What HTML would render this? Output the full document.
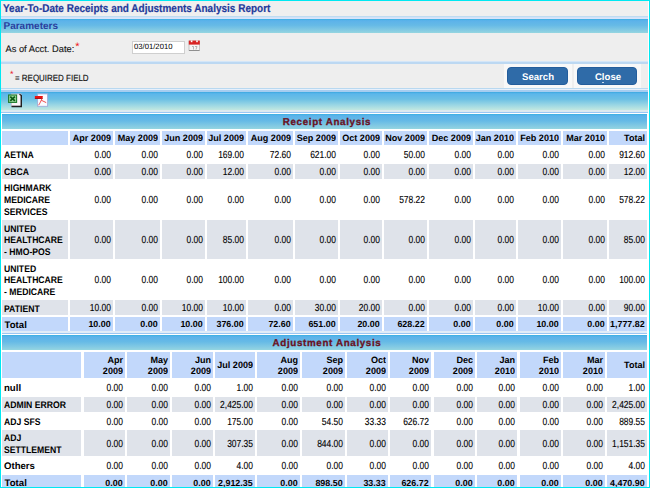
<!DOCTYPE html>
<html><head><meta charset="utf-8"><style>
html,body{margin:0;padding:0;}
body{width:650px;height:488px;position:relative;overflow:hidden;font-family:"Liberation Sans", sans-serif;text-rendering:geometricPrecision;}
body>div{position:absolute;}
.t{white-space:nowrap;}
</style></head><body>
<div style="left:0px;top:0px;width:650px;height:488px;background:#ffffff;"></div><div style="left:1px;top:1px;width:647px;height:15px;background:#efefef;"></div><div class="t" style="left:3px;top:3.29px;font-size:11.3px;line-height:12.99px;font-weight:bold;color:#1f3b9b;transform:scaleX(0.885);transform-origin:0 0;-webkit-text-stroke:0.2px #1f3b9b;">Year-To-Date Receipts and Adjustments Analysis Report</div><div style="left:1px;top:16px;width:647px;height:1px;background:#bedcf2;"></div><div style="left:1px;top:17px;width:647px;height:1px;background:#d2e2f8;"></div><div style="left:1px;top:18px;width:647px;height:1px;background:#d8e4fa;"></div><div style="left:1px;top:19px;width:647px;height:14px;background:linear-gradient(#3ab0e2 0,#5cb2ea 12%,#66bae6 45%,#8ccfe2 90%,#94d6e0 100%);"></div><div class="t" style="left:3.5px;top:20.89px;font-size:10px;line-height:11.5px;font-weight:bold;color:#2a3f9e;">Parameters</div><div style="left:1px;top:33px;width:647px;height:28px;background:#eeeeee;"></div><div class="t" style="left:5.5px;top:43.73px;font-size:9.3px;line-height:10.7px;font-weight:normal;color:#151515;-webkit-text-stroke:0.12px #151515;">As of Acct. Date:</div><div class="t" style="left:75.3px;top:40.66px;font-size:11px;line-height:12.65px;font-weight:normal;color:#f01818;">*</div><div style="left:132px;top:41px;width:53px;height:13px;background:#fff;border:1px solid #cfcfcf;box-sizing:border-box;"></div><div class="t" style="left:134px;top:42.81px;font-size:7.7px;line-height:8.85px;font-weight:normal;color:#000;">03/01/2010</div><svg style="position:absolute;left:186px;top:38px" width="16" height="16" viewBox="186 38 16 16"><rect x="189" y="41" width="10.5" height="9.5" fill="#f6f6f6" stroke="#b8b8b8" stroke-width="0.8"/><rect x="188.8" y="40.6" width="11" height="4" fill="#d82424"/><rect x="190.8" y="40.4" width="1.6" height="1.8" fill="#fff"/><rect x="196.2" y="40.4" width="1.6" height="1.8" fill="#fff"/><path d="M192 46.5 h1.5 v3 M195 46.5 h2 l-1 3" stroke="#9a9a9a" stroke-width="0.7" fill="none"/><rect x="189" y="50" width="10.5" height="0.9" fill="#8a8a8a"/></svg><div style="left:1px;top:61px;width:647px;height:1px;background:#d4e6f8;"></div><div style="left:1px;top:62px;width:647px;height:2px;background:#bcd8f2;"></div><div style="left:1px;top:64px;width:647px;height:24px;background:#eeeeee;"></div><div class="t" style="left:10px;top:68.71px;font-size:9px;line-height:10.35px;font-weight:normal;color:#e8141e;">*</div><div class="t" style="left:14.5px;top:72.72px;font-size:9.1px;line-height:10.46px;font-weight:normal;color:#111;transform:scaleX(0.875);transform-origin:0 0;-webkit-text-stroke:0.15px #111;">= REQUIRED FIELD</div><div style="left:503.5px;top:64px;width:68.0px;height:24px;background:#f8f8f8;"></div><div style="left:573.5px;top:64px;width:67.5px;height:24px;background:#f8f8f8;"></div><div style="left:507px;top:66.7px;width:60.5px;height:18.5px;background:#2f6ba8;border:1px solid #235d9c;box-sizing:border-box;border-radius:4px;"></div><div style="left:577.3px;top:66.7px;width:60.200000000000045px;height:18.5px;background:#2f6ba8;border:1px solid #235d9c;box-sizing:border-box;border-radius:4px;"></div><div class="t" style="left:238px;top:71.85px;width:600px;text-align:center;font-size:9.6px;line-height:11.04px;font-weight:bold;color:#fff;">Search</div><div class="t" style="left:308px;top:71.85px;width:600px;text-align:center;font-size:9.6px;line-height:11.04px;font-weight:bold;color:#fff;">Close</div><div style="left:601.5px;top:81.5px;width:2.0px;height:1.0px;background:#c8d8ec;"></div><div style="left:1px;top:88px;width:647px;height:1px;background:#b8d8f0;"></div><div style="left:1px;top:89px;width:647px;height:1px;background:#e6f0fc;"></div><div style="left:1px;top:90px;width:647px;height:2px;background:#a6cdf0;"></div><div style="left:1px;top:92px;width:647px;height:17.5px;background:linear-gradient(#3aa8e0 0,#5cb6ea 10%,#6cc0e4 40%,#9ad6e4 72%,#c2e8e0 100%);"></div><div style="left:1px;top:109.5px;width:647px;height:2.0px;background:#dce9f0;"></div><div style="left:1px;top:111.5px;width:647px;height:1.0px;background:#9cc6f4;"></div><div style="left:1px;top:112.5px;width:647px;height:1.5px;background:#ffffff;"></div><svg style="position:absolute;left:0;top:88px" width="60" height="24" viewBox="0 88 60 24"><rect x="11.5" y="94" width="9.5" height="12" fill="#fbf6f8" stroke="#d0c8d0" stroke-width="0.8"/><path d="M19.5 94.2 L21.3 95.5 V106.5 H11.5" stroke="#202020" stroke-width="1.4" fill="none"/><rect x="8.6" y="95" width="8" height="7.4" fill="#98d898" stroke="#1f7a2c" stroke-width="1.1"/><path d="M10.3 96.6 L14.9 100.8 M14.9 96.6 L10.3 100.8" stroke="#0b5a14" stroke-width="1.7"/><rect x="37.6" y="93.9" width="10" height="12.4" fill="#fbfbff" stroke="#a0acd8" stroke-width="0.9"/><path d="M34.9 96 L42.8 96 L42.6 98.8 L34.9 98.8 Z" fill="#e81010"/><path d="M34.9 98 L42.6 98 L42.6 98.8 L34.9 98.8 Z" fill="#a00808"/><path d="M42 98.5 C41 101 39.8 103.5 38.6 105.2 M41.2 100.2 L46.2 102.6" stroke="#ee3a3a" stroke-width="0.9" fill="none"/></svg><div style="left:2px;top:114px;width:645px;height:15px;background:linear-gradient(#3ab0e2 0,#5cb2ea 12%,#66bae6 45%,#8ccfe2 90%,#94d6e0 100%);"></div><div class="t" style="left:27px;top:116.87px;width:600px;text-align:center;font-size:9.8px;line-height:11.27px;font-weight:bold;color:#6a1222;letter-spacing:0.65px;-webkit-text-stroke:0.3px #6a1222;">Receipt Analysis</div><div style="left:2px;top:131px;width:66px;height:14px;background:#c2d8fb;"></div><div class="t" style="left:4px;top:133.95px;font-size:9.6px;line-height:11.04px;font-weight:bold;color:#000;transform:scaleX(0.9);transform-origin:0 0;"></div><div style="left:70px;top:131px;width:43px;height:14px;background:#c2d8fb;"></div><div class="t" style="left:-188.9px;top:133.22px;width:300px;text-align:right;font-size:9.2px;line-height:10.58px;font-weight:bold;color:#000;transform:scaleX(0.985);transform-origin:100% 0;">Apr 2009</div><div style="left:115px;top:131px;width:45px;height:14px;background:#c2d8fb;"></div><div class="t" style="left:-141.9px;top:133.22px;width:300px;text-align:right;font-size:9.2px;line-height:10.58px;font-weight:bold;color:#000;transform:scaleX(0.985);transform-origin:100% 0;">May 2009</div><div style="left:162px;top:131px;width:43px;height:14px;background:#c2d8fb;"></div><div class="t" style="left:-96.9px;top:133.22px;width:300px;text-align:right;font-size:9.2px;line-height:10.58px;font-weight:bold;color:#000;transform:scaleX(0.985);transform-origin:100% 0;">Jun 2009</div><div style="left:207px;top:131px;width:39px;height:14px;background:#c2d8fb;"></div><div class="t" style="left:-55.900000000000006px;top:133.22px;width:300px;text-align:right;font-size:9.2px;line-height:10.58px;font-weight:bold;color:#000;transform:scaleX(0.985);transform-origin:100% 0;">Jul 2009</div><div style="left:248px;top:131px;width:45px;height:14px;background:#c2d8fb;"></div><div class="t" style="left:-8.899999999999977px;top:133.22px;width:300px;text-align:right;font-size:9.2px;line-height:10.58px;font-weight:bold;color:#000;transform:scaleX(0.985);transform-origin:100% 0;">Aug 2009</div><div style="left:295px;top:131px;width:43px;height:14px;background:#c2d8fb;"></div><div class="t" style="left:36.10000000000002px;top:133.22px;width:300px;text-align:right;font-size:9.2px;line-height:10.58px;font-weight:bold;color:#000;transform:scaleX(0.985);transform-origin:100% 0;">Sep 2009</div><div style="left:340px;top:131px;width:42px;height:14px;background:#c2d8fb;"></div><div class="t" style="left:80.10000000000002px;top:133.22px;width:300px;text-align:right;font-size:9.2px;line-height:10.58px;font-weight:bold;color:#000;transform:scaleX(0.985);transform-origin:100% 0;">Oct 2009</div><div style="left:384px;top:131px;width:43px;height:14px;background:#c2d8fb;"></div><div class="t" style="left:125.10000000000002px;top:133.22px;width:300px;text-align:right;font-size:9.2px;line-height:10.58px;font-weight:bold;color:#000;transform:scaleX(0.985);transform-origin:100% 0;">Nov 2009</div><div style="left:429px;top:131px;width:44px;height:14px;background:#c2d8fb;"></div><div class="t" style="left:171.10000000000002px;top:133.22px;width:300px;text-align:right;font-size:9.2px;line-height:10.58px;font-weight:bold;color:#000;transform:scaleX(0.985);transform-origin:100% 0;">Dec 2009</div><div style="left:475px;top:131px;width:41px;height:14px;background:#c2d8fb;"></div><div class="t" style="left:214.10000000000002px;top:133.22px;width:300px;text-align:right;font-size:9.2px;line-height:10.58px;font-weight:bold;color:#000;transform:scaleX(0.985);transform-origin:100% 0;">Jan 2010</div><div style="left:518px;top:131px;width:43px;height:14px;background:#c2d8fb;"></div><div class="t" style="left:259.1px;top:133.22px;width:300px;text-align:right;font-size:9.2px;line-height:10.58px;font-weight:bold;color:#000;transform:scaleX(0.985);transform-origin:100% 0;">Feb 2010</div><div style="left:563px;top:131px;width:44px;height:14px;background:#c2d8fb;"></div><div class="t" style="left:305.1px;top:133.22px;width:300px;text-align:right;font-size:9.2px;line-height:10.58px;font-weight:bold;color:#000;transform:scaleX(0.985);transform-origin:100% 0;">Mar 2010</div><div style="left:609px;top:131px;width:38px;height:14px;background:#c2d8fb;"></div><div class="t" style="left:345.1px;top:133.22px;width:300px;text-align:right;font-size:9.2px;line-height:10.58px;font-weight:bold;color:#000;transform:scaleX(0.985);transform-origin:100% 0;">Total</div><div style="left:2px;top:147px;width:66px;height:15px;background:#ffffff;"></div><div class="t" style="left:4px;top:150.45px;font-size:9.6px;line-height:11.04px;font-weight:bold;color:#000;transform:scaleX(0.9);transform-origin:0 0;">AETNA</div><div style="left:70px;top:147px;width:43px;height:15px;background:#ffffff;"></div><div class="t" style="left:-189.1px;top:150.3px;width:300px;text-align:right;font-size:10.2px;line-height:11.73px;font-weight:normal;color:#000;text-rendering:geometricPrecision;transform:scaleX(0.83);transform-origin:100% 0;-webkit-text-stroke:0.12px #000;">0.00</div><div style="left:115px;top:147px;width:45px;height:15px;background:#ffffff;"></div><div class="t" style="left:-142.1px;top:150.3px;width:300px;text-align:right;font-size:10.2px;line-height:11.73px;font-weight:normal;color:#000;text-rendering:geometricPrecision;transform:scaleX(0.83);transform-origin:100% 0;-webkit-text-stroke:0.12px #000;">0.00</div><div style="left:162px;top:147px;width:43px;height:15px;background:#ffffff;"></div><div class="t" style="left:-97.1px;top:150.3px;width:300px;text-align:right;font-size:10.2px;line-height:11.73px;font-weight:normal;color:#000;text-rendering:geometricPrecision;transform:scaleX(0.83);transform-origin:100% 0;-webkit-text-stroke:0.12px #000;">0.00</div><div style="left:207px;top:147px;width:39px;height:15px;background:#ffffff;"></div><div class="t" style="left:-56.099999999999994px;top:150.3px;width:300px;text-align:right;font-size:10.2px;line-height:11.73px;font-weight:normal;color:#000;text-rendering:geometricPrecision;transform:scaleX(0.83);transform-origin:100% 0;-webkit-text-stroke:0.12px #000;">169.00</div><div style="left:248px;top:147px;width:45px;height:15px;background:#ffffff;"></div><div class="t" style="left:-9.100000000000023px;top:150.3px;width:300px;text-align:right;font-size:10.2px;line-height:11.73px;font-weight:normal;color:#000;text-rendering:geometricPrecision;transform:scaleX(0.83);transform-origin:100% 0;-webkit-text-stroke:0.12px #000;">72.60</div><div style="left:295px;top:147px;width:43px;height:15px;background:#ffffff;"></div><div class="t" style="left:35.89999999999998px;top:150.3px;width:300px;text-align:right;font-size:10.2px;line-height:11.73px;font-weight:normal;color:#000;text-rendering:geometricPrecision;transform:scaleX(0.83);transform-origin:100% 0;-webkit-text-stroke:0.12px #000;">621.00</div><div style="left:340px;top:147px;width:42px;height:15px;background:#ffffff;"></div><div class="t" style="left:79.89999999999998px;top:150.3px;width:300px;text-align:right;font-size:10.2px;line-height:11.73px;font-weight:normal;color:#000;text-rendering:geometricPrecision;transform:scaleX(0.83);transform-origin:100% 0;-webkit-text-stroke:0.12px #000;">0.00</div><div style="left:384px;top:147px;width:43px;height:15px;background:#ffffff;"></div><div class="t" style="left:124.89999999999998px;top:150.3px;width:300px;text-align:right;font-size:10.2px;line-height:11.73px;font-weight:normal;color:#000;text-rendering:geometricPrecision;transform:scaleX(0.83);transform-origin:100% 0;-webkit-text-stroke:0.12px #000;">50.00</div><div style="left:429px;top:147px;width:44px;height:15px;background:#ffffff;"></div><div class="t" style="left:170.89999999999998px;top:150.3px;width:300px;text-align:right;font-size:10.2px;line-height:11.73px;font-weight:normal;color:#000;text-rendering:geometricPrecision;transform:scaleX(0.83);transform-origin:100% 0;-webkit-text-stroke:0.12px #000;">0.00</div><div style="left:475px;top:147px;width:41px;height:15px;background:#ffffff;"></div><div class="t" style="left:213.89999999999998px;top:150.3px;width:300px;text-align:right;font-size:10.2px;line-height:11.73px;font-weight:normal;color:#000;text-rendering:geometricPrecision;transform:scaleX(0.83);transform-origin:100% 0;-webkit-text-stroke:0.12px #000;">0.00</div><div style="left:518px;top:147px;width:43px;height:15px;background:#ffffff;"></div><div class="t" style="left:258.9px;top:150.3px;width:300px;text-align:right;font-size:10.2px;line-height:11.73px;font-weight:normal;color:#000;text-rendering:geometricPrecision;transform:scaleX(0.83);transform-origin:100% 0;-webkit-text-stroke:0.12px #000;">0.00</div><div style="left:563px;top:147px;width:44px;height:15px;background:#ffffff;"></div><div class="t" style="left:304.9px;top:150.3px;width:300px;text-align:right;font-size:10.2px;line-height:11.73px;font-weight:normal;color:#000;text-rendering:geometricPrecision;transform:scaleX(0.83);transform-origin:100% 0;-webkit-text-stroke:0.12px #000;">0.00</div><div style="left:609px;top:147px;width:38px;height:15px;background:#ffffff;"></div><div class="t" style="left:344.9px;top:150.3px;width:300px;text-align:right;font-size:10.2px;line-height:11.73px;font-weight:normal;color:#000;text-rendering:geometricPrecision;transform:scaleX(0.83);transform-origin:100% 0;-webkit-text-stroke:0.12px #000;">912.60</div><div style="left:2px;top:164px;width:66px;height:15px;background:#dfe3ea;"></div><div class="t" style="left:4px;top:167.45px;font-size:9.6px;line-height:11.04px;font-weight:bold;color:#000;transform:scaleX(0.9);transform-origin:0 0;">CBCA</div><div style="left:70px;top:164px;width:43px;height:15px;background:#dfe3ea;"></div><div class="t" style="left:-189.1px;top:167.3px;width:300px;text-align:right;font-size:10.2px;line-height:11.73px;font-weight:normal;color:#000;text-rendering:geometricPrecision;transform:scaleX(0.83);transform-origin:100% 0;-webkit-text-stroke:0.12px #000;">0.00</div><div style="left:115px;top:164px;width:45px;height:15px;background:#dfe3ea;"></div><div class="t" style="left:-142.1px;top:167.3px;width:300px;text-align:right;font-size:10.2px;line-height:11.73px;font-weight:normal;color:#000;text-rendering:geometricPrecision;transform:scaleX(0.83);transform-origin:100% 0;-webkit-text-stroke:0.12px #000;">0.00</div><div style="left:162px;top:164px;width:43px;height:15px;background:#dfe3ea;"></div><div class="t" style="left:-97.1px;top:167.3px;width:300px;text-align:right;font-size:10.2px;line-height:11.73px;font-weight:normal;color:#000;text-rendering:geometricPrecision;transform:scaleX(0.83);transform-origin:100% 0;-webkit-text-stroke:0.12px #000;">0.00</div><div style="left:207px;top:164px;width:39px;height:15px;background:#dfe3ea;"></div><div class="t" style="left:-56.099999999999994px;top:167.3px;width:300px;text-align:right;font-size:10.2px;line-height:11.73px;font-weight:normal;color:#000;text-rendering:geometricPrecision;transform:scaleX(0.83);transform-origin:100% 0;-webkit-text-stroke:0.12px #000;">12.00</div><div style="left:248px;top:164px;width:45px;height:15px;background:#dfe3ea;"></div><div class="t" style="left:-9.100000000000023px;top:167.3px;width:300px;text-align:right;font-size:10.2px;line-height:11.73px;font-weight:normal;color:#000;text-rendering:geometricPrecision;transform:scaleX(0.83);transform-origin:100% 0;-webkit-text-stroke:0.12px #000;">0.00</div><div style="left:295px;top:164px;width:43px;height:15px;background:#dfe3ea;"></div><div class="t" style="left:35.89999999999998px;top:167.3px;width:300px;text-align:right;font-size:10.2px;line-height:11.73px;font-weight:normal;color:#000;text-rendering:geometricPrecision;transform:scaleX(0.83);transform-origin:100% 0;-webkit-text-stroke:0.12px #000;">0.00</div><div style="left:340px;top:164px;width:42px;height:15px;background:#dfe3ea;"></div><div class="t" style="left:79.89999999999998px;top:167.3px;width:300px;text-align:right;font-size:10.2px;line-height:11.73px;font-weight:normal;color:#000;text-rendering:geometricPrecision;transform:scaleX(0.83);transform-origin:100% 0;-webkit-text-stroke:0.12px #000;">0.00</div><div style="left:384px;top:164px;width:43px;height:15px;background:#dfe3ea;"></div><div class="t" style="left:124.89999999999998px;top:167.3px;width:300px;text-align:right;font-size:10.2px;line-height:11.73px;font-weight:normal;color:#000;text-rendering:geometricPrecision;transform:scaleX(0.83);transform-origin:100% 0;-webkit-text-stroke:0.12px #000;">0.00</div><div style="left:429px;top:164px;width:44px;height:15px;background:#dfe3ea;"></div><div class="t" style="left:170.89999999999998px;top:167.3px;width:300px;text-align:right;font-size:10.2px;line-height:11.73px;font-weight:normal;color:#000;text-rendering:geometricPrecision;transform:scaleX(0.83);transform-origin:100% 0;-webkit-text-stroke:0.12px #000;">0.00</div><div style="left:475px;top:164px;width:41px;height:15px;background:#dfe3ea;"></div><div class="t" style="left:213.89999999999998px;top:167.3px;width:300px;text-align:right;font-size:10.2px;line-height:11.73px;font-weight:normal;color:#000;text-rendering:geometricPrecision;transform:scaleX(0.83);transform-origin:100% 0;-webkit-text-stroke:0.12px #000;">0.00</div><div style="left:518px;top:164px;width:43px;height:15px;background:#dfe3ea;"></div><div class="t" style="left:258.9px;top:167.3px;width:300px;text-align:right;font-size:10.2px;line-height:11.73px;font-weight:normal;color:#000;text-rendering:geometricPrecision;transform:scaleX(0.83);transform-origin:100% 0;-webkit-text-stroke:0.12px #000;">0.00</div><div style="left:563px;top:164px;width:44px;height:15px;background:#dfe3ea;"></div><div class="t" style="left:304.9px;top:167.3px;width:300px;text-align:right;font-size:10.2px;line-height:11.73px;font-weight:normal;color:#000;text-rendering:geometricPrecision;transform:scaleX(0.83);transform-origin:100% 0;-webkit-text-stroke:0.12px #000;">0.00</div><div style="left:609px;top:164px;width:38px;height:15px;background:#dfe3ea;"></div><div class="t" style="left:344.9px;top:167.3px;width:300px;text-align:right;font-size:10.2px;line-height:11.73px;font-weight:normal;color:#000;text-rendering:geometricPrecision;transform:scaleX(0.83);transform-origin:100% 0;-webkit-text-stroke:0.12px #000;">12.00</div><div style="left:2px;top:180px;width:66px;height:38px;background:#ffffff;"></div><div class="t" style="left:4px;top:183.25px;font-size:9.6px;line-height:11.04px;font-weight:bold;color:#000;transform:scaleX(0.9);transform-origin:0 0;">HIGHMARK</div><div class="t" style="left:4px;top:194.95px;font-size:9.6px;line-height:11.04px;font-weight:bold;color:#000;transform:scaleX(0.9);transform-origin:0 0;">MEDICARE</div><div class="t" style="left:4px;top:206.65px;font-size:9.6px;line-height:11.04px;font-weight:bold;color:#000;transform:scaleX(0.9);transform-origin:0 0;">SERVICES</div><div style="left:70px;top:180px;width:43px;height:38px;background:#ffffff;"></div><div class="t" style="left:-189.1px;top:194.8px;width:300px;text-align:right;font-size:10.2px;line-height:11.73px;font-weight:normal;color:#000;text-rendering:geometricPrecision;transform:scaleX(0.83);transform-origin:100% 0;-webkit-text-stroke:0.12px #000;">0.00</div><div style="left:115px;top:180px;width:45px;height:38px;background:#ffffff;"></div><div class="t" style="left:-142.1px;top:194.8px;width:300px;text-align:right;font-size:10.2px;line-height:11.73px;font-weight:normal;color:#000;text-rendering:geometricPrecision;transform:scaleX(0.83);transform-origin:100% 0;-webkit-text-stroke:0.12px #000;">0.00</div><div style="left:162px;top:180px;width:43px;height:38px;background:#ffffff;"></div><div class="t" style="left:-97.1px;top:194.8px;width:300px;text-align:right;font-size:10.2px;line-height:11.73px;font-weight:normal;color:#000;text-rendering:geometricPrecision;transform:scaleX(0.83);transform-origin:100% 0;-webkit-text-stroke:0.12px #000;">0.00</div><div style="left:207px;top:180px;width:39px;height:38px;background:#ffffff;"></div><div class="t" style="left:-56.099999999999994px;top:194.8px;width:300px;text-align:right;font-size:10.2px;line-height:11.73px;font-weight:normal;color:#000;text-rendering:geometricPrecision;transform:scaleX(0.83);transform-origin:100% 0;-webkit-text-stroke:0.12px #000;">0.00</div><div style="left:248px;top:180px;width:45px;height:38px;background:#ffffff;"></div><div class="t" style="left:-9.100000000000023px;top:194.8px;width:300px;text-align:right;font-size:10.2px;line-height:11.73px;font-weight:normal;color:#000;text-rendering:geometricPrecision;transform:scaleX(0.83);transform-origin:100% 0;-webkit-text-stroke:0.12px #000;">0.00</div><div style="left:295px;top:180px;width:43px;height:38px;background:#ffffff;"></div><div class="t" style="left:35.89999999999998px;top:194.8px;width:300px;text-align:right;font-size:10.2px;line-height:11.73px;font-weight:normal;color:#000;text-rendering:geometricPrecision;transform:scaleX(0.83);transform-origin:100% 0;-webkit-text-stroke:0.12px #000;">0.00</div><div style="left:340px;top:180px;width:42px;height:38px;background:#ffffff;"></div><div class="t" style="left:79.89999999999998px;top:194.8px;width:300px;text-align:right;font-size:10.2px;line-height:11.73px;font-weight:normal;color:#000;text-rendering:geometricPrecision;transform:scaleX(0.83);transform-origin:100% 0;-webkit-text-stroke:0.12px #000;">0.00</div><div style="left:384px;top:180px;width:43px;height:38px;background:#ffffff;"></div><div class="t" style="left:124.89999999999998px;top:194.8px;width:300px;text-align:right;font-size:10.2px;line-height:11.73px;font-weight:normal;color:#000;text-rendering:geometricPrecision;transform:scaleX(0.83);transform-origin:100% 0;-webkit-text-stroke:0.12px #000;">578.22</div><div style="left:429px;top:180px;width:44px;height:38px;background:#ffffff;"></div><div class="t" style="left:170.89999999999998px;top:194.8px;width:300px;text-align:right;font-size:10.2px;line-height:11.73px;font-weight:normal;color:#000;text-rendering:geometricPrecision;transform:scaleX(0.83);transform-origin:100% 0;-webkit-text-stroke:0.12px #000;">0.00</div><div style="left:475px;top:180px;width:41px;height:38px;background:#ffffff;"></div><div class="t" style="left:213.89999999999998px;top:194.8px;width:300px;text-align:right;font-size:10.2px;line-height:11.73px;font-weight:normal;color:#000;text-rendering:geometricPrecision;transform:scaleX(0.83);transform-origin:100% 0;-webkit-text-stroke:0.12px #000;">0.00</div><div style="left:518px;top:180px;width:43px;height:38px;background:#ffffff;"></div><div class="t" style="left:258.9px;top:194.8px;width:300px;text-align:right;font-size:10.2px;line-height:11.73px;font-weight:normal;color:#000;text-rendering:geometricPrecision;transform:scaleX(0.83);transform-origin:100% 0;-webkit-text-stroke:0.12px #000;">0.00</div><div style="left:563px;top:180px;width:44px;height:38px;background:#ffffff;"></div><div class="t" style="left:304.9px;top:194.8px;width:300px;text-align:right;font-size:10.2px;line-height:11.73px;font-weight:normal;color:#000;text-rendering:geometricPrecision;transform:scaleX(0.83);transform-origin:100% 0;-webkit-text-stroke:0.12px #000;">0.00</div><div style="left:609px;top:180px;width:38px;height:38px;background:#ffffff;"></div><div class="t" style="left:344.9px;top:194.8px;width:300px;text-align:right;font-size:10.2px;line-height:11.73px;font-weight:normal;color:#000;text-rendering:geometricPrecision;transform:scaleX(0.83);transform-origin:100% 0;-webkit-text-stroke:0.12px #000;">578.22</div><div style="left:2px;top:220px;width:66px;height:38.60000000000002px;background:#dfe3ea;"></div><div class="t" style="left:4px;top:223.55px;font-size:9.6px;line-height:11.04px;font-weight:bold;color:#000;transform:scaleX(0.9);transform-origin:0 0;">UNITED</div><div class="t" style="left:4px;top:235.25px;font-size:9.6px;line-height:11.04px;font-weight:bold;color:#000;transform:scaleX(0.9);transform-origin:0 0;">HEALTHCARE</div><div class="t" style="left:4px;top:246.95px;font-size:9.6px;line-height:11.04px;font-weight:bold;color:#000;transform:scaleX(0.9);transform-origin:0 0;">- HMO-POS</div><div style="left:70px;top:220px;width:43px;height:38.60000000000002px;background:#dfe3ea;"></div><div class="t" style="left:-189.1px;top:235.1px;width:300px;text-align:right;font-size:10.2px;line-height:11.73px;font-weight:normal;color:#000;text-rendering:geometricPrecision;transform:scaleX(0.83);transform-origin:100% 0;-webkit-text-stroke:0.12px #000;">0.00</div><div style="left:115px;top:220px;width:45px;height:38.60000000000002px;background:#dfe3ea;"></div><div class="t" style="left:-142.1px;top:235.1px;width:300px;text-align:right;font-size:10.2px;line-height:11.73px;font-weight:normal;color:#000;text-rendering:geometricPrecision;transform:scaleX(0.83);transform-origin:100% 0;-webkit-text-stroke:0.12px #000;">0.00</div><div style="left:162px;top:220px;width:43px;height:38.60000000000002px;background:#dfe3ea;"></div><div class="t" style="left:-97.1px;top:235.1px;width:300px;text-align:right;font-size:10.2px;line-height:11.73px;font-weight:normal;color:#000;text-rendering:geometricPrecision;transform:scaleX(0.83);transform-origin:100% 0;-webkit-text-stroke:0.12px #000;">0.00</div><div style="left:207px;top:220px;width:39px;height:38.60000000000002px;background:#dfe3ea;"></div><div class="t" style="left:-56.099999999999994px;top:235.1px;width:300px;text-align:right;font-size:10.2px;line-height:11.73px;font-weight:normal;color:#000;text-rendering:geometricPrecision;transform:scaleX(0.83);transform-origin:100% 0;-webkit-text-stroke:0.12px #000;">85.00</div><div style="left:248px;top:220px;width:45px;height:38.60000000000002px;background:#dfe3ea;"></div><div class="t" style="left:-9.100000000000023px;top:235.1px;width:300px;text-align:right;font-size:10.2px;line-height:11.73px;font-weight:normal;color:#000;text-rendering:geometricPrecision;transform:scaleX(0.83);transform-origin:100% 0;-webkit-text-stroke:0.12px #000;">0.00</div><div style="left:295px;top:220px;width:43px;height:38.60000000000002px;background:#dfe3ea;"></div><div class="t" style="left:35.89999999999998px;top:235.1px;width:300px;text-align:right;font-size:10.2px;line-height:11.73px;font-weight:normal;color:#000;text-rendering:geometricPrecision;transform:scaleX(0.83);transform-origin:100% 0;-webkit-text-stroke:0.12px #000;">0.00</div><div style="left:340px;top:220px;width:42px;height:38.60000000000002px;background:#dfe3ea;"></div><div class="t" style="left:79.89999999999998px;top:235.1px;width:300px;text-align:right;font-size:10.2px;line-height:11.73px;font-weight:normal;color:#000;text-rendering:geometricPrecision;transform:scaleX(0.83);transform-origin:100% 0;-webkit-text-stroke:0.12px #000;">0.00</div><div style="left:384px;top:220px;width:43px;height:38.60000000000002px;background:#dfe3ea;"></div><div class="t" style="left:124.89999999999998px;top:235.1px;width:300px;text-align:right;font-size:10.2px;line-height:11.73px;font-weight:normal;color:#000;text-rendering:geometricPrecision;transform:scaleX(0.83);transform-origin:100% 0;-webkit-text-stroke:0.12px #000;">0.00</div><div style="left:429px;top:220px;width:44px;height:38.60000000000002px;background:#dfe3ea;"></div><div class="t" style="left:170.89999999999998px;top:235.1px;width:300px;text-align:right;font-size:10.2px;line-height:11.73px;font-weight:normal;color:#000;text-rendering:geometricPrecision;transform:scaleX(0.83);transform-origin:100% 0;-webkit-text-stroke:0.12px #000;">0.00</div><div style="left:475px;top:220px;width:41px;height:38.60000000000002px;background:#dfe3ea;"></div><div class="t" style="left:213.89999999999998px;top:235.1px;width:300px;text-align:right;font-size:10.2px;line-height:11.73px;font-weight:normal;color:#000;text-rendering:geometricPrecision;transform:scaleX(0.83);transform-origin:100% 0;-webkit-text-stroke:0.12px #000;">0.00</div><div style="left:518px;top:220px;width:43px;height:38.60000000000002px;background:#dfe3ea;"></div><div class="t" style="left:258.9px;top:235.1px;width:300px;text-align:right;font-size:10.2px;line-height:11.73px;font-weight:normal;color:#000;text-rendering:geometricPrecision;transform:scaleX(0.83);transform-origin:100% 0;-webkit-text-stroke:0.12px #000;">0.00</div><div style="left:563px;top:220px;width:44px;height:38.60000000000002px;background:#dfe3ea;"></div><div class="t" style="left:304.9px;top:235.1px;width:300px;text-align:right;font-size:10.2px;line-height:11.73px;font-weight:normal;color:#000;text-rendering:geometricPrecision;transform:scaleX(0.83);transform-origin:100% 0;-webkit-text-stroke:0.12px #000;">0.00</div><div style="left:609px;top:220px;width:38px;height:38.60000000000002px;background:#dfe3ea;"></div><div class="t" style="left:344.9px;top:235.1px;width:300px;text-align:right;font-size:10.2px;line-height:11.73px;font-weight:normal;color:#000;text-rendering:geometricPrecision;transform:scaleX(0.83);transform-origin:100% 0;-webkit-text-stroke:0.12px #000;">85.00</div><div style="left:2px;top:260.6px;width:66px;height:37.599999999999966px;background:#ffffff;"></div><div class="t" style="left:4px;top:263.65px;font-size:9.6px;line-height:11.04px;font-weight:bold;color:#000;transform:scaleX(0.9);transform-origin:0 0;">UNITED</div><div class="t" style="left:4px;top:275.35px;font-size:9.6px;line-height:11.04px;font-weight:bold;color:#000;transform:scaleX(0.9);transform-origin:0 0;">HEALTHCARE</div><div class="t" style="left:4px;top:287.05px;font-size:9.6px;line-height:11.04px;font-weight:bold;color:#000;transform:scaleX(0.9);transform-origin:0 0;">- MEDICARE</div><div style="left:70px;top:260.6px;width:43px;height:37.599999999999966px;background:#ffffff;"></div><div class="t" style="left:-189.1px;top:275.2px;width:300px;text-align:right;font-size:10.2px;line-height:11.73px;font-weight:normal;color:#000;text-rendering:geometricPrecision;transform:scaleX(0.83);transform-origin:100% 0;-webkit-text-stroke:0.12px #000;">0.00</div><div style="left:115px;top:260.6px;width:45px;height:37.599999999999966px;background:#ffffff;"></div><div class="t" style="left:-142.1px;top:275.2px;width:300px;text-align:right;font-size:10.2px;line-height:11.73px;font-weight:normal;color:#000;text-rendering:geometricPrecision;transform:scaleX(0.83);transform-origin:100% 0;-webkit-text-stroke:0.12px #000;">0.00</div><div style="left:162px;top:260.6px;width:43px;height:37.599999999999966px;background:#ffffff;"></div><div class="t" style="left:-97.1px;top:275.2px;width:300px;text-align:right;font-size:10.2px;line-height:11.73px;font-weight:normal;color:#000;text-rendering:geometricPrecision;transform:scaleX(0.83);transform-origin:100% 0;-webkit-text-stroke:0.12px #000;">0.00</div><div style="left:207px;top:260.6px;width:39px;height:37.599999999999966px;background:#ffffff;"></div><div class="t" style="left:-56.099999999999994px;top:275.2px;width:300px;text-align:right;font-size:10.2px;line-height:11.73px;font-weight:normal;color:#000;text-rendering:geometricPrecision;transform:scaleX(0.83);transform-origin:100% 0;-webkit-text-stroke:0.12px #000;">100.00</div><div style="left:248px;top:260.6px;width:45px;height:37.599999999999966px;background:#ffffff;"></div><div class="t" style="left:-9.100000000000023px;top:275.2px;width:300px;text-align:right;font-size:10.2px;line-height:11.73px;font-weight:normal;color:#000;text-rendering:geometricPrecision;transform:scaleX(0.83);transform-origin:100% 0;-webkit-text-stroke:0.12px #000;">0.00</div><div style="left:295px;top:260.6px;width:43px;height:37.599999999999966px;background:#ffffff;"></div><div class="t" style="left:35.89999999999998px;top:275.2px;width:300px;text-align:right;font-size:10.2px;line-height:11.73px;font-weight:normal;color:#000;text-rendering:geometricPrecision;transform:scaleX(0.83);transform-origin:100% 0;-webkit-text-stroke:0.12px #000;">0.00</div><div style="left:340px;top:260.6px;width:42px;height:37.599999999999966px;background:#ffffff;"></div><div class="t" style="left:79.89999999999998px;top:275.2px;width:300px;text-align:right;font-size:10.2px;line-height:11.73px;font-weight:normal;color:#000;text-rendering:geometricPrecision;transform:scaleX(0.83);transform-origin:100% 0;-webkit-text-stroke:0.12px #000;">0.00</div><div style="left:384px;top:260.6px;width:43px;height:37.599999999999966px;background:#ffffff;"></div><div class="t" style="left:124.89999999999998px;top:275.2px;width:300px;text-align:right;font-size:10.2px;line-height:11.73px;font-weight:normal;color:#000;text-rendering:geometricPrecision;transform:scaleX(0.83);transform-origin:100% 0;-webkit-text-stroke:0.12px #000;">0.00</div><div style="left:429px;top:260.6px;width:44px;height:37.599999999999966px;background:#ffffff;"></div><div class="t" style="left:170.89999999999998px;top:275.2px;width:300px;text-align:right;font-size:10.2px;line-height:11.73px;font-weight:normal;color:#000;text-rendering:geometricPrecision;transform:scaleX(0.83);transform-origin:100% 0;-webkit-text-stroke:0.12px #000;">0.00</div><div style="left:475px;top:260.6px;width:41px;height:37.599999999999966px;background:#ffffff;"></div><div class="t" style="left:213.89999999999998px;top:275.2px;width:300px;text-align:right;font-size:10.2px;line-height:11.73px;font-weight:normal;color:#000;text-rendering:geometricPrecision;transform:scaleX(0.83);transform-origin:100% 0;-webkit-text-stroke:0.12px #000;">0.00</div><div style="left:518px;top:260.6px;width:43px;height:37.599999999999966px;background:#ffffff;"></div><div class="t" style="left:258.9px;top:275.2px;width:300px;text-align:right;font-size:10.2px;line-height:11.73px;font-weight:normal;color:#000;text-rendering:geometricPrecision;transform:scaleX(0.83);transform-origin:100% 0;-webkit-text-stroke:0.12px #000;">0.00</div><div style="left:563px;top:260.6px;width:44px;height:37.599999999999966px;background:#ffffff;"></div><div class="t" style="left:304.9px;top:275.2px;width:300px;text-align:right;font-size:10.2px;line-height:11.73px;font-weight:normal;color:#000;text-rendering:geometricPrecision;transform:scaleX(0.83);transform-origin:100% 0;-webkit-text-stroke:0.12px #000;">0.00</div><div style="left:609px;top:260.6px;width:38px;height:37.599999999999966px;background:#ffffff;"></div><div class="t" style="left:344.9px;top:275.2px;width:300px;text-align:right;font-size:10.2px;line-height:11.73px;font-weight:normal;color:#000;text-rendering:geometricPrecision;transform:scaleX(0.83);transform-origin:100% 0;-webkit-text-stroke:0.12px #000;">100.00</div><div style="left:2px;top:300.2px;width:66px;height:14.800000000000011px;background:#dfe3ea;"></div><div class="t" style="left:4px;top:303.55px;font-size:9.6px;line-height:11.04px;font-weight:bold;color:#000;transform:scaleX(0.9);transform-origin:0 0;">PATIENT</div><div style="left:70px;top:300.2px;width:43px;height:14.800000000000011px;background:#dfe3ea;"></div><div class="t" style="left:-189.1px;top:303.4px;width:300px;text-align:right;font-size:10.2px;line-height:11.73px;font-weight:normal;color:#000;text-rendering:geometricPrecision;transform:scaleX(0.83);transform-origin:100% 0;-webkit-text-stroke:0.12px #000;">10.00</div><div style="left:115px;top:300.2px;width:45px;height:14.800000000000011px;background:#dfe3ea;"></div><div class="t" style="left:-142.1px;top:303.4px;width:300px;text-align:right;font-size:10.2px;line-height:11.73px;font-weight:normal;color:#000;text-rendering:geometricPrecision;transform:scaleX(0.83);transform-origin:100% 0;-webkit-text-stroke:0.12px #000;">0.00</div><div style="left:162px;top:300.2px;width:43px;height:14.800000000000011px;background:#dfe3ea;"></div><div class="t" style="left:-97.1px;top:303.4px;width:300px;text-align:right;font-size:10.2px;line-height:11.73px;font-weight:normal;color:#000;text-rendering:geometricPrecision;transform:scaleX(0.83);transform-origin:100% 0;-webkit-text-stroke:0.12px #000;">10.00</div><div style="left:207px;top:300.2px;width:39px;height:14.800000000000011px;background:#dfe3ea;"></div><div class="t" style="left:-56.099999999999994px;top:303.4px;width:300px;text-align:right;font-size:10.2px;line-height:11.73px;font-weight:normal;color:#000;text-rendering:geometricPrecision;transform:scaleX(0.83);transform-origin:100% 0;-webkit-text-stroke:0.12px #000;">10.00</div><div style="left:248px;top:300.2px;width:45px;height:14.800000000000011px;background:#dfe3ea;"></div><div class="t" style="left:-9.100000000000023px;top:303.4px;width:300px;text-align:right;font-size:10.2px;line-height:11.73px;font-weight:normal;color:#000;text-rendering:geometricPrecision;transform:scaleX(0.83);transform-origin:100% 0;-webkit-text-stroke:0.12px #000;">0.00</div><div style="left:295px;top:300.2px;width:43px;height:14.800000000000011px;background:#dfe3ea;"></div><div class="t" style="left:35.89999999999998px;top:303.4px;width:300px;text-align:right;font-size:10.2px;line-height:11.73px;font-weight:normal;color:#000;text-rendering:geometricPrecision;transform:scaleX(0.83);transform-origin:100% 0;-webkit-text-stroke:0.12px #000;">30.00</div><div style="left:340px;top:300.2px;width:42px;height:14.800000000000011px;background:#dfe3ea;"></div><div class="t" style="left:79.89999999999998px;top:303.4px;width:300px;text-align:right;font-size:10.2px;line-height:11.73px;font-weight:normal;color:#000;text-rendering:geometricPrecision;transform:scaleX(0.83);transform-origin:100% 0;-webkit-text-stroke:0.12px #000;">20.00</div><div style="left:384px;top:300.2px;width:43px;height:14.800000000000011px;background:#dfe3ea;"></div><div class="t" style="left:124.89999999999998px;top:303.4px;width:300px;text-align:right;font-size:10.2px;line-height:11.73px;font-weight:normal;color:#000;text-rendering:geometricPrecision;transform:scaleX(0.83);transform-origin:100% 0;-webkit-text-stroke:0.12px #000;">0.00</div><div style="left:429px;top:300.2px;width:44px;height:14.800000000000011px;background:#dfe3ea;"></div><div class="t" style="left:170.89999999999998px;top:303.4px;width:300px;text-align:right;font-size:10.2px;line-height:11.73px;font-weight:normal;color:#000;text-rendering:geometricPrecision;transform:scaleX(0.83);transform-origin:100% 0;-webkit-text-stroke:0.12px #000;">0.00</div><div style="left:475px;top:300.2px;width:41px;height:14.800000000000011px;background:#dfe3ea;"></div><div class="t" style="left:213.89999999999998px;top:303.4px;width:300px;text-align:right;font-size:10.2px;line-height:11.73px;font-weight:normal;color:#000;text-rendering:geometricPrecision;transform:scaleX(0.83);transform-origin:100% 0;-webkit-text-stroke:0.12px #000;">0.00</div><div style="left:518px;top:300.2px;width:43px;height:14.800000000000011px;background:#dfe3ea;"></div><div class="t" style="left:258.9px;top:303.4px;width:300px;text-align:right;font-size:10.2px;line-height:11.73px;font-weight:normal;color:#000;text-rendering:geometricPrecision;transform:scaleX(0.83);transform-origin:100% 0;-webkit-text-stroke:0.12px #000;">10.00</div><div style="left:563px;top:300.2px;width:44px;height:14.800000000000011px;background:#dfe3ea;"></div><div class="t" style="left:304.9px;top:303.4px;width:300px;text-align:right;font-size:10.2px;line-height:11.73px;font-weight:normal;color:#000;text-rendering:geometricPrecision;transform:scaleX(0.83);transform-origin:100% 0;-webkit-text-stroke:0.12px #000;">0.00</div><div style="left:609px;top:300.2px;width:38px;height:14.800000000000011px;background:#dfe3ea;"></div><div class="t" style="left:344.9px;top:303.4px;width:300px;text-align:right;font-size:10.2px;line-height:11.73px;font-weight:normal;color:#000;text-rendering:geometricPrecision;transform:scaleX(0.83);transform-origin:100% 0;-webkit-text-stroke:0.12px #000;">90.00</div><div style="left:2px;top:316.6px;width:66px;height:14.699999999999989px;background:#c2d8fb;"></div><div class="t" style="left:4.6px;top:319.9px;font-size:9.6px;line-height:11.04px;font-weight:bold;color:#000;transform:scaleX(1.0);transform-origin:0 0;">Total</div><div style="left:70px;top:316.6px;width:43px;height:14.699999999999989px;background:#c2d8fb;"></div><div class="t" style="left:-189.4px;top:319.45px;width:300px;text-align:right;font-size:8.9px;line-height:10.23px;font-weight:bold;color:#000;">10.00</div><div style="left:115px;top:316.6px;width:45px;height:14.699999999999989px;background:#c2d8fb;"></div><div class="t" style="left:-142.4px;top:319.45px;width:300px;text-align:right;font-size:8.9px;line-height:10.23px;font-weight:bold;color:#000;">0.00</div><div style="left:162px;top:316.6px;width:43px;height:14.699999999999989px;background:#c2d8fb;"></div><div class="t" style="left:-97.4px;top:319.45px;width:300px;text-align:right;font-size:8.9px;line-height:10.23px;font-weight:bold;color:#000;">10.00</div><div style="left:207px;top:316.6px;width:39px;height:14.699999999999989px;background:#c2d8fb;"></div><div class="t" style="left:-56.400000000000006px;top:319.45px;width:300px;text-align:right;font-size:8.9px;line-height:10.23px;font-weight:bold;color:#000;">376.00</div><div style="left:248px;top:316.6px;width:45px;height:14.699999999999989px;background:#c2d8fb;"></div><div class="t" style="left:-9.399999999999977px;top:319.45px;width:300px;text-align:right;font-size:8.9px;line-height:10.23px;font-weight:bold;color:#000;">72.60</div><div style="left:295px;top:316.6px;width:43px;height:14.699999999999989px;background:#c2d8fb;"></div><div class="t" style="left:35.60000000000002px;top:319.45px;width:300px;text-align:right;font-size:8.9px;line-height:10.23px;font-weight:bold;color:#000;">651.00</div><div style="left:340px;top:316.6px;width:42px;height:14.699999999999989px;background:#c2d8fb;"></div><div class="t" style="left:79.60000000000002px;top:319.45px;width:300px;text-align:right;font-size:8.9px;line-height:10.23px;font-weight:bold;color:#000;">20.00</div><div style="left:384px;top:316.6px;width:43px;height:14.699999999999989px;background:#c2d8fb;"></div><div class="t" style="left:124.60000000000002px;top:319.45px;width:300px;text-align:right;font-size:8.9px;line-height:10.23px;font-weight:bold;color:#000;">628.22</div><div style="left:429px;top:316.6px;width:44px;height:14.699999999999989px;background:#c2d8fb;"></div><div class="t" style="left:170.60000000000002px;top:319.45px;width:300px;text-align:right;font-size:8.9px;line-height:10.23px;font-weight:bold;color:#000;">0.00</div><div style="left:475px;top:316.6px;width:41px;height:14.699999999999989px;background:#c2d8fb;"></div><div class="t" style="left:213.60000000000002px;top:319.45px;width:300px;text-align:right;font-size:8.9px;line-height:10.23px;font-weight:bold;color:#000;">0.00</div><div style="left:518px;top:316.6px;width:43px;height:14.699999999999989px;background:#c2d8fb;"></div><div class="t" style="left:258.6px;top:319.45px;width:300px;text-align:right;font-size:8.9px;line-height:10.23px;font-weight:bold;color:#000;">10.00</div><div style="left:563px;top:316.6px;width:44px;height:14.699999999999989px;background:#c2d8fb;"></div><div class="t" style="left:304.6px;top:319.45px;width:300px;text-align:right;font-size:8.9px;line-height:10.23px;font-weight:bold;color:#000;">0.00</div><div style="left:609px;top:316.6px;width:38px;height:14.699999999999989px;background:#c2d8fb;"></div><div class="t" style="left:344.6px;top:319.45px;width:300px;text-align:right;font-size:8.9px;line-height:10.23px;font-weight:bold;color:#000;">1,777.82</div><div style="left:2px;top:331.3px;width:645px;height:1.3000000000000114px;background:#e2ecf8;"></div><div style="left:2px;top:332.6px;width:645px;height:0.8999999999999773px;background:#9cc6f2;"></div><div style="left:2px;top:335px;width:645px;height:15.300000000000011px;background:linear-gradient(#3ab0e2 0,#5cb2ea 12%,#66bae6 45%,#8ccfe2 90%,#94d6e0 100%);"></div><div class="t" style="left:27px;top:338.17px;width:600px;text-align:center;font-size:9.8px;line-height:11.27px;font-weight:bold;color:#6a1222;letter-spacing:0.65px;-webkit-text-stroke:0.3px #6a1222;">Adjustment Analysis</div><div style="left:2px;top:352px;width:79px;height:25.600000000000023px;background:#c2d8fb;"></div><div class="t" style="left:4px;top:360.75px;font-size:9.6px;line-height:11.04px;font-weight:bold;color:#000;transform:scaleX(0.9);transform-origin:0 0;"></div><div style="left:84px;top:352px;width:41px;height:25.600000000000023px;background:#c2d8fb;"></div><div class="t" style="left:-176.9px;top:354.52px;width:300px;text-align:right;font-size:9.2px;line-height:10.58px;font-weight:bold;color:#000;transform:scaleX(0.985);transform-origin:100% 0;">Apr</div><div class="t" style="left:-176.9px;top:365.72px;width:300px;text-align:right;font-size:9.2px;line-height:10.58px;font-weight:bold;color:#000;transform:scaleX(0.985);transform-origin:100% 0;">2009</div><div style="left:127px;top:352px;width:43px;height:25.600000000000023px;background:#c2d8fb;"></div><div class="t" style="left:-131.9px;top:354.52px;width:300px;text-align:right;font-size:9.2px;line-height:10.58px;font-weight:bold;color:#000;transform:scaleX(0.985);transform-origin:100% 0;">May</div><div class="t" style="left:-131.9px;top:365.72px;width:300px;text-align:right;font-size:9.2px;line-height:10.58px;font-weight:bold;color:#000;transform:scaleX(0.985);transform-origin:100% 0;">2009</div><div style="left:172px;top:352px;width:41px;height:25.600000000000023px;background:#c2d8fb;"></div><div class="t" style="left:-88.9px;top:354.52px;width:300px;text-align:right;font-size:9.2px;line-height:10.58px;font-weight:bold;color:#000;transform:scaleX(0.985);transform-origin:100% 0;">Jun</div><div class="t" style="left:-88.9px;top:365.72px;width:300px;text-align:right;font-size:9.2px;line-height:10.58px;font-weight:bold;color:#000;transform:scaleX(0.985);transform-origin:100% 0;">2009</div><div style="left:215px;top:352px;width:40px;height:25.600000000000023px;background:#c2d8fb;"></div><div class="t" style="left:-46.900000000000006px;top:360.02px;width:300px;text-align:right;font-size:9.2px;line-height:10.58px;font-weight:bold;color:#000;transform:scaleX(0.985);transform-origin:100% 0;">Jul 2009</div><div style="left:257px;top:352px;width:43px;height:25.600000000000023px;background:#c2d8fb;"></div><div class="t" style="left:-1.8999999999999773px;top:354.52px;width:300px;text-align:right;font-size:9.2px;line-height:10.58px;font-weight:bold;color:#000;transform:scaleX(0.985);transform-origin:100% 0;">Aug</div><div class="t" style="left:-1.8999999999999773px;top:365.72px;width:300px;text-align:right;font-size:9.2px;line-height:10.58px;font-weight:bold;color:#000;transform:scaleX(0.985);transform-origin:100% 0;">2009</div><div style="left:302px;top:352px;width:43px;height:25.600000000000023px;background:#c2d8fb;"></div><div class="t" style="left:43.10000000000002px;top:354.52px;width:300px;text-align:right;font-size:9.2px;line-height:10.58px;font-weight:bold;color:#000;transform:scaleX(0.985);transform-origin:100% 0;">Sep</div><div class="t" style="left:43.10000000000002px;top:365.72px;width:300px;text-align:right;font-size:9.2px;line-height:10.58px;font-weight:bold;color:#000;transform:scaleX(0.985);transform-origin:100% 0;">2009</div><div style="left:347px;top:352px;width:41px;height:25.600000000000023px;background:#c2d8fb;"></div><div class="t" style="left:86.10000000000002px;top:354.52px;width:300px;text-align:right;font-size:9.2px;line-height:10.58px;font-weight:bold;color:#000;transform:scaleX(0.985);transform-origin:100% 0;">Oct</div><div class="t" style="left:86.10000000000002px;top:365.72px;width:300px;text-align:right;font-size:9.2px;line-height:10.58px;font-weight:bold;color:#000;transform:scaleX(0.985);transform-origin:100% 0;">2009</div><div style="left:390px;top:352px;width:41px;height:25.600000000000023px;background:#c2d8fb;"></div><div class="t" style="left:129.10000000000002px;top:354.52px;width:300px;text-align:right;font-size:9.2px;line-height:10.58px;font-weight:bold;color:#000;transform:scaleX(0.985);transform-origin:100% 0;">Nov</div><div class="t" style="left:129.10000000000002px;top:365.72px;width:300px;text-align:right;font-size:9.2px;line-height:10.58px;font-weight:bold;color:#000;transform:scaleX(0.985);transform-origin:100% 0;">2009</div><div style="left:434px;top:352px;width:41px;height:25.600000000000023px;background:#c2d8fb;"></div><div class="t" style="left:173.10000000000002px;top:354.52px;width:300px;text-align:right;font-size:9.2px;line-height:10.58px;font-weight:bold;color:#000;transform:scaleX(0.985);transform-origin:100% 0;">Dec</div><div class="t" style="left:173.10000000000002px;top:365.72px;width:300px;text-align:right;font-size:9.2px;line-height:10.58px;font-weight:bold;color:#000;transform:scaleX(0.985);transform-origin:100% 0;">2009</div><div style="left:477px;top:352px;width:40px;height:25.600000000000023px;background:#c2d8fb;"></div><div class="t" style="left:215.10000000000002px;top:354.52px;width:300px;text-align:right;font-size:9.2px;line-height:10.58px;font-weight:bold;color:#000;transform:scaleX(0.985);transform-origin:100% 0;">Jan</div><div class="t" style="left:215.10000000000002px;top:365.72px;width:300px;text-align:right;font-size:9.2px;line-height:10.58px;font-weight:bold;color:#000;transform:scaleX(0.985);transform-origin:100% 0;">2010</div><div style="left:520px;top:352px;width:41px;height:25.600000000000023px;background:#c2d8fb;"></div><div class="t" style="left:259.1px;top:354.52px;width:300px;text-align:right;font-size:9.2px;line-height:10.58px;font-weight:bold;color:#000;transform:scaleX(0.985);transform-origin:100% 0;">Feb</div><div class="t" style="left:259.1px;top:365.72px;width:300px;text-align:right;font-size:9.2px;line-height:10.58px;font-weight:bold;color:#000;transform:scaleX(0.985);transform-origin:100% 0;">2010</div><div style="left:563px;top:352px;width:42px;height:25.600000000000023px;background:#c2d8fb;"></div><div class="t" style="left:303.1px;top:354.52px;width:300px;text-align:right;font-size:9.2px;line-height:10.58px;font-weight:bold;color:#000;transform:scaleX(0.985);transform-origin:100% 0;">Mar</div><div class="t" style="left:303.1px;top:365.72px;width:300px;text-align:right;font-size:9.2px;line-height:10.58px;font-weight:bold;color:#000;transform:scaleX(0.985);transform-origin:100% 0;">2010</div><div style="left:607px;top:352px;width:40px;height:25.600000000000023px;background:#c2d8fb;"></div><div class="t" style="left:345.1px;top:360.02px;width:300px;text-align:right;font-size:9.2px;line-height:10.58px;font-weight:bold;color:#000;transform:scaleX(0.985);transform-origin:100% 0;">Total</div><div style="left:2px;top:379.9px;width:79px;height:15.100000000000023px;background:#ffffff;"></div><div class="t" style="left:4px;top:383.4px;font-size:9.6px;line-height:11.04px;font-weight:bold;color:#000;transform:scaleX(1.0);transform-origin:0 0;">null</div><div style="left:84px;top:379.9px;width:41px;height:15.100000000000023px;background:#ffffff;"></div><div class="t" style="left:-177.1px;top:383.25px;width:300px;text-align:right;font-size:10.2px;line-height:11.73px;font-weight:normal;color:#000;text-rendering:geometricPrecision;transform:scaleX(0.83);transform-origin:100% 0;-webkit-text-stroke:0.12px #000;">0.00</div><div style="left:127px;top:379.9px;width:43px;height:15.100000000000023px;background:#ffffff;"></div><div class="t" style="left:-132.1px;top:383.25px;width:300px;text-align:right;font-size:10.2px;line-height:11.73px;font-weight:normal;color:#000;text-rendering:geometricPrecision;transform:scaleX(0.83);transform-origin:100% 0;-webkit-text-stroke:0.12px #000;">0.00</div><div style="left:172px;top:379.9px;width:41px;height:15.100000000000023px;background:#ffffff;"></div><div class="t" style="left:-89.1px;top:383.25px;width:300px;text-align:right;font-size:10.2px;line-height:11.73px;font-weight:normal;color:#000;text-rendering:geometricPrecision;transform:scaleX(0.83);transform-origin:100% 0;-webkit-text-stroke:0.12px #000;">0.00</div><div style="left:215px;top:379.9px;width:40px;height:15.100000000000023px;background:#ffffff;"></div><div class="t" style="left:-47.099999999999994px;top:383.25px;width:300px;text-align:right;font-size:10.2px;line-height:11.73px;font-weight:normal;color:#000;text-rendering:geometricPrecision;transform:scaleX(0.83);transform-origin:100% 0;-webkit-text-stroke:0.12px #000;">1.00</div><div style="left:257px;top:379.9px;width:43px;height:15.100000000000023px;background:#ffffff;"></div><div class="t" style="left:-2.1000000000000227px;top:383.25px;width:300px;text-align:right;font-size:10.2px;line-height:11.73px;font-weight:normal;color:#000;text-rendering:geometricPrecision;transform:scaleX(0.83);transform-origin:100% 0;-webkit-text-stroke:0.12px #000;">0.00</div><div style="left:302px;top:379.9px;width:43px;height:15.100000000000023px;background:#ffffff;"></div><div class="t" style="left:42.89999999999998px;top:383.25px;width:300px;text-align:right;font-size:10.2px;line-height:11.73px;font-weight:normal;color:#000;text-rendering:geometricPrecision;transform:scaleX(0.83);transform-origin:100% 0;-webkit-text-stroke:0.12px #000;">0.00</div><div style="left:347px;top:379.9px;width:41px;height:15.100000000000023px;background:#ffffff;"></div><div class="t" style="left:85.89999999999998px;top:383.25px;width:300px;text-align:right;font-size:10.2px;line-height:11.73px;font-weight:normal;color:#000;text-rendering:geometricPrecision;transform:scaleX(0.83);transform-origin:100% 0;-webkit-text-stroke:0.12px #000;">0.00</div><div style="left:390px;top:379.9px;width:41px;height:15.100000000000023px;background:#ffffff;"></div><div class="t" style="left:128.89999999999998px;top:383.25px;width:300px;text-align:right;font-size:10.2px;line-height:11.73px;font-weight:normal;color:#000;text-rendering:geometricPrecision;transform:scaleX(0.83);transform-origin:100% 0;-webkit-text-stroke:0.12px #000;">0.00</div><div style="left:434px;top:379.9px;width:41px;height:15.100000000000023px;background:#ffffff;"></div><div class="t" style="left:172.89999999999998px;top:383.25px;width:300px;text-align:right;font-size:10.2px;line-height:11.73px;font-weight:normal;color:#000;text-rendering:geometricPrecision;transform:scaleX(0.83);transform-origin:100% 0;-webkit-text-stroke:0.12px #000;">0.00</div><div style="left:477px;top:379.9px;width:40px;height:15.100000000000023px;background:#ffffff;"></div><div class="t" style="left:214.89999999999998px;top:383.25px;width:300px;text-align:right;font-size:10.2px;line-height:11.73px;font-weight:normal;color:#000;text-rendering:geometricPrecision;transform:scaleX(0.83);transform-origin:100% 0;-webkit-text-stroke:0.12px #000;">0.00</div><div style="left:520px;top:379.9px;width:41px;height:15.100000000000023px;background:#ffffff;"></div><div class="t" style="left:258.9px;top:383.25px;width:300px;text-align:right;font-size:10.2px;line-height:11.73px;font-weight:normal;color:#000;text-rendering:geometricPrecision;transform:scaleX(0.83);transform-origin:100% 0;-webkit-text-stroke:0.12px #000;">0.00</div><div style="left:563px;top:379.9px;width:42px;height:15.100000000000023px;background:#ffffff;"></div><div class="t" style="left:302.9px;top:383.25px;width:300px;text-align:right;font-size:10.2px;line-height:11.73px;font-weight:normal;color:#000;text-rendering:geometricPrecision;transform:scaleX(0.83);transform-origin:100% 0;-webkit-text-stroke:0.12px #000;">0.00</div><div style="left:607px;top:379.9px;width:40px;height:15.100000000000023px;background:#ffffff;"></div><div class="t" style="left:344.9px;top:383.25px;width:300px;text-align:right;font-size:10.2px;line-height:11.73px;font-weight:normal;color:#000;text-rendering:geometricPrecision;transform:scaleX(0.83);transform-origin:100% 0;-webkit-text-stroke:0.12px #000;">1.00</div><div style="left:2px;top:396.5px;width:79px;height:15.199999999999989px;background:#dfe3ea;"></div><div class="t" style="left:4px;top:400.05px;font-size:9.6px;line-height:11.04px;font-weight:bold;color:#000;transform:scaleX(0.9);transform-origin:0 0;">ADMIN ERROR</div><div style="left:84px;top:396.5px;width:41px;height:15.199999999999989px;background:#dfe3ea;"></div><div class="t" style="left:-177.1px;top:399.9px;width:300px;text-align:right;font-size:10.2px;line-height:11.73px;font-weight:normal;color:#000;text-rendering:geometricPrecision;transform:scaleX(0.83);transform-origin:100% 0;-webkit-text-stroke:0.12px #000;">0.00</div><div style="left:127px;top:396.5px;width:43px;height:15.199999999999989px;background:#dfe3ea;"></div><div class="t" style="left:-132.1px;top:399.9px;width:300px;text-align:right;font-size:10.2px;line-height:11.73px;font-weight:normal;color:#000;text-rendering:geometricPrecision;transform:scaleX(0.83);transform-origin:100% 0;-webkit-text-stroke:0.12px #000;">0.00</div><div style="left:172px;top:396.5px;width:41px;height:15.199999999999989px;background:#dfe3ea;"></div><div class="t" style="left:-89.1px;top:399.9px;width:300px;text-align:right;font-size:10.2px;line-height:11.73px;font-weight:normal;color:#000;text-rendering:geometricPrecision;transform:scaleX(0.83);transform-origin:100% 0;-webkit-text-stroke:0.12px #000;">0.00</div><div style="left:215px;top:396.5px;width:40px;height:15.199999999999989px;background:#dfe3ea;"></div><div class="t" style="left:-47.099999999999994px;top:399.9px;width:300px;text-align:right;font-size:10.2px;line-height:11.73px;font-weight:normal;color:#000;text-rendering:geometricPrecision;transform:scaleX(0.83);transform-origin:100% 0;-webkit-text-stroke:0.12px #000;">2,425.00</div><div style="left:257px;top:396.5px;width:43px;height:15.199999999999989px;background:#dfe3ea;"></div><div class="t" style="left:-2.1000000000000227px;top:399.9px;width:300px;text-align:right;font-size:10.2px;line-height:11.73px;font-weight:normal;color:#000;text-rendering:geometricPrecision;transform:scaleX(0.83);transform-origin:100% 0;-webkit-text-stroke:0.12px #000;">0.00</div><div style="left:302px;top:396.5px;width:43px;height:15.199999999999989px;background:#dfe3ea;"></div><div class="t" style="left:42.89999999999998px;top:399.9px;width:300px;text-align:right;font-size:10.2px;line-height:11.73px;font-weight:normal;color:#000;text-rendering:geometricPrecision;transform:scaleX(0.83);transform-origin:100% 0;-webkit-text-stroke:0.12px #000;">0.00</div><div style="left:347px;top:396.5px;width:41px;height:15.199999999999989px;background:#dfe3ea;"></div><div class="t" style="left:85.89999999999998px;top:399.9px;width:300px;text-align:right;font-size:10.2px;line-height:11.73px;font-weight:normal;color:#000;text-rendering:geometricPrecision;transform:scaleX(0.83);transform-origin:100% 0;-webkit-text-stroke:0.12px #000;">0.00</div><div style="left:390px;top:396.5px;width:41px;height:15.199999999999989px;background:#dfe3ea;"></div><div class="t" style="left:128.89999999999998px;top:399.9px;width:300px;text-align:right;font-size:10.2px;line-height:11.73px;font-weight:normal;color:#000;text-rendering:geometricPrecision;transform:scaleX(0.83);transform-origin:100% 0;-webkit-text-stroke:0.12px #000;">0.00</div><div style="left:434px;top:396.5px;width:41px;height:15.199999999999989px;background:#dfe3ea;"></div><div class="t" style="left:172.89999999999998px;top:399.9px;width:300px;text-align:right;font-size:10.2px;line-height:11.73px;font-weight:normal;color:#000;text-rendering:geometricPrecision;transform:scaleX(0.83);transform-origin:100% 0;-webkit-text-stroke:0.12px #000;">0.00</div><div style="left:477px;top:396.5px;width:40px;height:15.199999999999989px;background:#dfe3ea;"></div><div class="t" style="left:214.89999999999998px;top:399.9px;width:300px;text-align:right;font-size:10.2px;line-height:11.73px;font-weight:normal;color:#000;text-rendering:geometricPrecision;transform:scaleX(0.83);transform-origin:100% 0;-webkit-text-stroke:0.12px #000;">0.00</div><div style="left:520px;top:396.5px;width:41px;height:15.199999999999989px;background:#dfe3ea;"></div><div class="t" style="left:258.9px;top:399.9px;width:300px;text-align:right;font-size:10.2px;line-height:11.73px;font-weight:normal;color:#000;text-rendering:geometricPrecision;transform:scaleX(0.83);transform-origin:100% 0;-webkit-text-stroke:0.12px #000;">0.00</div><div style="left:563px;top:396.5px;width:42px;height:15.199999999999989px;background:#dfe3ea;"></div><div class="t" style="left:302.9px;top:399.9px;width:300px;text-align:right;font-size:10.2px;line-height:11.73px;font-weight:normal;color:#000;text-rendering:geometricPrecision;transform:scaleX(0.83);transform-origin:100% 0;-webkit-text-stroke:0.12px #000;">0.00</div><div style="left:607px;top:396.5px;width:40px;height:15.199999999999989px;background:#dfe3ea;"></div><div class="t" style="left:344.9px;top:399.9px;width:300px;text-align:right;font-size:10.2px;line-height:11.73px;font-weight:normal;color:#000;text-rendering:geometricPrecision;transform:scaleX(0.83);transform-origin:100% 0;-webkit-text-stroke:0.12px #000;">2,425.00</div><div style="left:2px;top:413.5px;width:79px;height:14.5px;background:#ffffff;"></div><div class="t" style="left:4px;top:416.7px;font-size:9.6px;line-height:11.04px;font-weight:bold;color:#000;transform:scaleX(0.9);transform-origin:0 0;">ADJ SFS</div><div style="left:84px;top:413.5px;width:41px;height:14.5px;background:#ffffff;"></div><div class="t" style="left:-177.1px;top:416.55px;width:300px;text-align:right;font-size:10.2px;line-height:11.73px;font-weight:normal;color:#000;text-rendering:geometricPrecision;transform:scaleX(0.83);transform-origin:100% 0;-webkit-text-stroke:0.12px #000;">0.00</div><div style="left:127px;top:413.5px;width:43px;height:14.5px;background:#ffffff;"></div><div class="t" style="left:-132.1px;top:416.55px;width:300px;text-align:right;font-size:10.2px;line-height:11.73px;font-weight:normal;color:#000;text-rendering:geometricPrecision;transform:scaleX(0.83);transform-origin:100% 0;-webkit-text-stroke:0.12px #000;">0.00</div><div style="left:172px;top:413.5px;width:41px;height:14.5px;background:#ffffff;"></div><div class="t" style="left:-89.1px;top:416.55px;width:300px;text-align:right;font-size:10.2px;line-height:11.73px;font-weight:normal;color:#000;text-rendering:geometricPrecision;transform:scaleX(0.83);transform-origin:100% 0;-webkit-text-stroke:0.12px #000;">0.00</div><div style="left:215px;top:413.5px;width:40px;height:14.5px;background:#ffffff;"></div><div class="t" style="left:-47.099999999999994px;top:416.55px;width:300px;text-align:right;font-size:10.2px;line-height:11.73px;font-weight:normal;color:#000;text-rendering:geometricPrecision;transform:scaleX(0.83);transform-origin:100% 0;-webkit-text-stroke:0.12px #000;">175.00</div><div style="left:257px;top:413.5px;width:43px;height:14.5px;background:#ffffff;"></div><div class="t" style="left:-2.1000000000000227px;top:416.55px;width:300px;text-align:right;font-size:10.2px;line-height:11.73px;font-weight:normal;color:#000;text-rendering:geometricPrecision;transform:scaleX(0.83);transform-origin:100% 0;-webkit-text-stroke:0.12px #000;">0.00</div><div style="left:302px;top:413.5px;width:43px;height:14.5px;background:#ffffff;"></div><div class="t" style="left:42.89999999999998px;top:416.55px;width:300px;text-align:right;font-size:10.2px;line-height:11.73px;font-weight:normal;color:#000;text-rendering:geometricPrecision;transform:scaleX(0.83);transform-origin:100% 0;-webkit-text-stroke:0.12px #000;">54.50</div><div style="left:347px;top:413.5px;width:41px;height:14.5px;background:#ffffff;"></div><div class="t" style="left:85.89999999999998px;top:416.55px;width:300px;text-align:right;font-size:10.2px;line-height:11.73px;font-weight:normal;color:#000;text-rendering:geometricPrecision;transform:scaleX(0.83);transform-origin:100% 0;-webkit-text-stroke:0.12px #000;">33.33</div><div style="left:390px;top:413.5px;width:41px;height:14.5px;background:#ffffff;"></div><div class="t" style="left:128.89999999999998px;top:416.55px;width:300px;text-align:right;font-size:10.2px;line-height:11.73px;font-weight:normal;color:#000;text-rendering:geometricPrecision;transform:scaleX(0.83);transform-origin:100% 0;-webkit-text-stroke:0.12px #000;">626.72</div><div style="left:434px;top:413.5px;width:41px;height:14.5px;background:#ffffff;"></div><div class="t" style="left:172.89999999999998px;top:416.55px;width:300px;text-align:right;font-size:10.2px;line-height:11.73px;font-weight:normal;color:#000;text-rendering:geometricPrecision;transform:scaleX(0.83);transform-origin:100% 0;-webkit-text-stroke:0.12px #000;">0.00</div><div style="left:477px;top:413.5px;width:40px;height:14.5px;background:#ffffff;"></div><div class="t" style="left:214.89999999999998px;top:416.55px;width:300px;text-align:right;font-size:10.2px;line-height:11.73px;font-weight:normal;color:#000;text-rendering:geometricPrecision;transform:scaleX(0.83);transform-origin:100% 0;-webkit-text-stroke:0.12px #000;">0.00</div><div style="left:520px;top:413.5px;width:41px;height:14.5px;background:#ffffff;"></div><div class="t" style="left:258.9px;top:416.55px;width:300px;text-align:right;font-size:10.2px;line-height:11.73px;font-weight:normal;color:#000;text-rendering:geometricPrecision;transform:scaleX(0.83);transform-origin:100% 0;-webkit-text-stroke:0.12px #000;">0.00</div><div style="left:563px;top:413.5px;width:42px;height:14.5px;background:#ffffff;"></div><div class="t" style="left:302.9px;top:416.55px;width:300px;text-align:right;font-size:10.2px;line-height:11.73px;font-weight:normal;color:#000;text-rendering:geometricPrecision;transform:scaleX(0.83);transform-origin:100% 0;-webkit-text-stroke:0.12px #000;">0.00</div><div style="left:607px;top:413.5px;width:40px;height:14.5px;background:#ffffff;"></div><div class="t" style="left:344.9px;top:416.55px;width:300px;text-align:right;font-size:10.2px;line-height:11.73px;font-weight:normal;color:#000;text-rendering:geometricPrecision;transform:scaleX(0.83);transform-origin:100% 0;-webkit-text-stroke:0.12px #000;">889.55</div><div style="left:2px;top:430px;width:79px;height:26px;background:#dfe3ea;"></div><div class="t" style="left:4px;top:433.35px;font-size:9.6px;line-height:11.04px;font-weight:bold;color:#000;transform:scaleX(0.9);transform-origin:0 0;">ADJ</div><div class="t" style="left:4px;top:444.55px;font-size:9.6px;line-height:11.04px;font-weight:bold;color:#000;transform:scaleX(0.9);transform-origin:0 0;">SETTLEMENT</div><div style="left:84px;top:430px;width:41px;height:26px;background:#dfe3ea;"></div><div class="t" style="left:-177.1px;top:438.8px;width:300px;text-align:right;font-size:10.2px;line-height:11.73px;font-weight:normal;color:#000;text-rendering:geometricPrecision;transform:scaleX(0.83);transform-origin:100% 0;-webkit-text-stroke:0.12px #000;">0.00</div><div style="left:127px;top:430px;width:43px;height:26px;background:#dfe3ea;"></div><div class="t" style="left:-132.1px;top:438.8px;width:300px;text-align:right;font-size:10.2px;line-height:11.73px;font-weight:normal;color:#000;text-rendering:geometricPrecision;transform:scaleX(0.83);transform-origin:100% 0;-webkit-text-stroke:0.12px #000;">0.00</div><div style="left:172px;top:430px;width:41px;height:26px;background:#dfe3ea;"></div><div class="t" style="left:-89.1px;top:438.8px;width:300px;text-align:right;font-size:10.2px;line-height:11.73px;font-weight:normal;color:#000;text-rendering:geometricPrecision;transform:scaleX(0.83);transform-origin:100% 0;-webkit-text-stroke:0.12px #000;">0.00</div><div style="left:215px;top:430px;width:40px;height:26px;background:#dfe3ea;"></div><div class="t" style="left:-47.099999999999994px;top:438.8px;width:300px;text-align:right;font-size:10.2px;line-height:11.73px;font-weight:normal;color:#000;text-rendering:geometricPrecision;transform:scaleX(0.83);transform-origin:100% 0;-webkit-text-stroke:0.12px #000;">307.35</div><div style="left:257px;top:430px;width:43px;height:26px;background:#dfe3ea;"></div><div class="t" style="left:-2.1000000000000227px;top:438.8px;width:300px;text-align:right;font-size:10.2px;line-height:11.73px;font-weight:normal;color:#000;text-rendering:geometricPrecision;transform:scaleX(0.83);transform-origin:100% 0;-webkit-text-stroke:0.12px #000;">0.00</div><div style="left:302px;top:430px;width:43px;height:26px;background:#dfe3ea;"></div><div class="t" style="left:42.89999999999998px;top:438.8px;width:300px;text-align:right;font-size:10.2px;line-height:11.73px;font-weight:normal;color:#000;text-rendering:geometricPrecision;transform:scaleX(0.83);transform-origin:100% 0;-webkit-text-stroke:0.12px #000;">844.00</div><div style="left:347px;top:430px;width:41px;height:26px;background:#dfe3ea;"></div><div class="t" style="left:85.89999999999998px;top:438.8px;width:300px;text-align:right;font-size:10.2px;line-height:11.73px;font-weight:normal;color:#000;text-rendering:geometricPrecision;transform:scaleX(0.83);transform-origin:100% 0;-webkit-text-stroke:0.12px #000;">0.00</div><div style="left:390px;top:430px;width:41px;height:26px;background:#dfe3ea;"></div><div class="t" style="left:128.89999999999998px;top:438.8px;width:300px;text-align:right;font-size:10.2px;line-height:11.73px;font-weight:normal;color:#000;text-rendering:geometricPrecision;transform:scaleX(0.83);transform-origin:100% 0;-webkit-text-stroke:0.12px #000;">0.00</div><div style="left:434px;top:430px;width:41px;height:26px;background:#dfe3ea;"></div><div class="t" style="left:172.89999999999998px;top:438.8px;width:300px;text-align:right;font-size:10.2px;line-height:11.73px;font-weight:normal;color:#000;text-rendering:geometricPrecision;transform:scaleX(0.83);transform-origin:100% 0;-webkit-text-stroke:0.12px #000;">0.00</div><div style="left:477px;top:430px;width:40px;height:26px;background:#dfe3ea;"></div><div class="t" style="left:214.89999999999998px;top:438.8px;width:300px;text-align:right;font-size:10.2px;line-height:11.73px;font-weight:normal;color:#000;text-rendering:geometricPrecision;transform:scaleX(0.83);transform-origin:100% 0;-webkit-text-stroke:0.12px #000;">0.00</div><div style="left:520px;top:430px;width:41px;height:26px;background:#dfe3ea;"></div><div class="t" style="left:258.9px;top:438.8px;width:300px;text-align:right;font-size:10.2px;line-height:11.73px;font-weight:normal;color:#000;text-rendering:geometricPrecision;transform:scaleX(0.83);transform-origin:100% 0;-webkit-text-stroke:0.12px #000;">0.00</div><div style="left:563px;top:430px;width:42px;height:26px;background:#dfe3ea;"></div><div class="t" style="left:302.9px;top:438.8px;width:300px;text-align:right;font-size:10.2px;line-height:11.73px;font-weight:normal;color:#000;text-rendering:geometricPrecision;transform:scaleX(0.83);transform-origin:100% 0;-webkit-text-stroke:0.12px #000;">0.00</div><div style="left:607px;top:430px;width:40px;height:26px;background:#dfe3ea;"></div><div class="t" style="left:344.9px;top:438.8px;width:300px;text-align:right;font-size:10.2px;line-height:11.73px;font-weight:normal;color:#000;text-rendering:geometricPrecision;transform:scaleX(0.83);transform-origin:100% 0;-webkit-text-stroke:0.12px #000;">1,151.35</div><div style="left:2px;top:458px;width:79px;height:15px;background:#ffffff;"></div><div class="t" style="left:4px;top:461.45px;font-size:9.6px;line-height:11.04px;font-weight:bold;color:#000;transform:scaleX(1.0);transform-origin:0 0;">Others</div><div style="left:84px;top:458px;width:41px;height:15px;background:#ffffff;"></div><div class="t" style="left:-177.1px;top:461.3px;width:300px;text-align:right;font-size:10.2px;line-height:11.73px;font-weight:normal;color:#000;text-rendering:geometricPrecision;transform:scaleX(0.83);transform-origin:100% 0;-webkit-text-stroke:0.12px #000;">0.00</div><div style="left:127px;top:458px;width:43px;height:15px;background:#ffffff;"></div><div class="t" style="left:-132.1px;top:461.3px;width:300px;text-align:right;font-size:10.2px;line-height:11.73px;font-weight:normal;color:#000;text-rendering:geometricPrecision;transform:scaleX(0.83);transform-origin:100% 0;-webkit-text-stroke:0.12px #000;">0.00</div><div style="left:172px;top:458px;width:41px;height:15px;background:#ffffff;"></div><div class="t" style="left:-89.1px;top:461.3px;width:300px;text-align:right;font-size:10.2px;line-height:11.73px;font-weight:normal;color:#000;text-rendering:geometricPrecision;transform:scaleX(0.83);transform-origin:100% 0;-webkit-text-stroke:0.12px #000;">0.00</div><div style="left:215px;top:458px;width:40px;height:15px;background:#ffffff;"></div><div class="t" style="left:-47.099999999999994px;top:461.3px;width:300px;text-align:right;font-size:10.2px;line-height:11.73px;font-weight:normal;color:#000;text-rendering:geometricPrecision;transform:scaleX(0.83);transform-origin:100% 0;-webkit-text-stroke:0.12px #000;">4.00</div><div style="left:257px;top:458px;width:43px;height:15px;background:#ffffff;"></div><div class="t" style="left:-2.1000000000000227px;top:461.3px;width:300px;text-align:right;font-size:10.2px;line-height:11.73px;font-weight:normal;color:#000;text-rendering:geometricPrecision;transform:scaleX(0.83);transform-origin:100% 0;-webkit-text-stroke:0.12px #000;">0.00</div><div style="left:302px;top:458px;width:43px;height:15px;background:#ffffff;"></div><div class="t" style="left:42.89999999999998px;top:461.3px;width:300px;text-align:right;font-size:10.2px;line-height:11.73px;font-weight:normal;color:#000;text-rendering:geometricPrecision;transform:scaleX(0.83);transform-origin:100% 0;-webkit-text-stroke:0.12px #000;">0.00</div><div style="left:347px;top:458px;width:41px;height:15px;background:#ffffff;"></div><div class="t" style="left:85.89999999999998px;top:461.3px;width:300px;text-align:right;font-size:10.2px;line-height:11.73px;font-weight:normal;color:#000;text-rendering:geometricPrecision;transform:scaleX(0.83);transform-origin:100% 0;-webkit-text-stroke:0.12px #000;">0.00</div><div style="left:390px;top:458px;width:41px;height:15px;background:#ffffff;"></div><div class="t" style="left:128.89999999999998px;top:461.3px;width:300px;text-align:right;font-size:10.2px;line-height:11.73px;font-weight:normal;color:#000;text-rendering:geometricPrecision;transform:scaleX(0.83);transform-origin:100% 0;-webkit-text-stroke:0.12px #000;">0.00</div><div style="left:434px;top:458px;width:41px;height:15px;background:#ffffff;"></div><div class="t" style="left:172.89999999999998px;top:461.3px;width:300px;text-align:right;font-size:10.2px;line-height:11.73px;font-weight:normal;color:#000;text-rendering:geometricPrecision;transform:scaleX(0.83);transform-origin:100% 0;-webkit-text-stroke:0.12px #000;">0.00</div><div style="left:477px;top:458px;width:40px;height:15px;background:#ffffff;"></div><div class="t" style="left:214.89999999999998px;top:461.3px;width:300px;text-align:right;font-size:10.2px;line-height:11.73px;font-weight:normal;color:#000;text-rendering:geometricPrecision;transform:scaleX(0.83);transform-origin:100% 0;-webkit-text-stroke:0.12px #000;">0.00</div><div style="left:520px;top:458px;width:41px;height:15px;background:#ffffff;"></div><div class="t" style="left:258.9px;top:461.3px;width:300px;text-align:right;font-size:10.2px;line-height:11.73px;font-weight:normal;color:#000;text-rendering:geometricPrecision;transform:scaleX(0.83);transform-origin:100% 0;-webkit-text-stroke:0.12px #000;">0.00</div><div style="left:563px;top:458px;width:42px;height:15px;background:#ffffff;"></div><div class="t" style="left:302.9px;top:461.3px;width:300px;text-align:right;font-size:10.2px;line-height:11.73px;font-weight:normal;color:#000;text-rendering:geometricPrecision;transform:scaleX(0.83);transform-origin:100% 0;-webkit-text-stroke:0.12px #000;">0.00</div><div style="left:607px;top:458px;width:40px;height:15px;background:#ffffff;"></div><div class="t" style="left:344.9px;top:461.3px;width:300px;text-align:right;font-size:10.2px;line-height:11.73px;font-weight:normal;color:#000;text-rendering:geometricPrecision;transform:scaleX(0.83);transform-origin:100% 0;-webkit-text-stroke:0.12px #000;">4.00</div><div style="left:2px;top:475px;width:79px;height:15px;background:#c2d8fb;"></div><div class="t" style="left:4.6px;top:478.45px;font-size:9.6px;line-height:11.04px;font-weight:bold;color:#000;transform:scaleX(1.0);transform-origin:0 0;">Total</div><div style="left:84px;top:475px;width:41px;height:15px;background:#c2d8fb;"></div><div class="t" style="left:-177.4px;top:478.0px;width:300px;text-align:right;font-size:8.9px;line-height:10.23px;font-weight:bold;color:#000;">0.00</div><div style="left:127px;top:475px;width:43px;height:15px;background:#c2d8fb;"></div><div class="t" style="left:-132.4px;top:478.0px;width:300px;text-align:right;font-size:8.9px;line-height:10.23px;font-weight:bold;color:#000;">0.00</div><div style="left:172px;top:475px;width:41px;height:15px;background:#c2d8fb;"></div><div class="t" style="left:-89.4px;top:478.0px;width:300px;text-align:right;font-size:8.9px;line-height:10.23px;font-weight:bold;color:#000;">0.00</div><div style="left:215px;top:475px;width:40px;height:15px;background:#c2d8fb;"></div><div class="t" style="left:-47.400000000000006px;top:478.0px;width:300px;text-align:right;font-size:8.9px;line-height:10.23px;font-weight:bold;color:#000;">2,912.35</div><div style="left:257px;top:475px;width:43px;height:15px;background:#c2d8fb;"></div><div class="t" style="left:-2.3999999999999773px;top:478.0px;width:300px;text-align:right;font-size:8.9px;line-height:10.23px;font-weight:bold;color:#000;">0.00</div><div style="left:302px;top:475px;width:43px;height:15px;background:#c2d8fb;"></div><div class="t" style="left:42.60000000000002px;top:478.0px;width:300px;text-align:right;font-size:8.9px;line-height:10.23px;font-weight:bold;color:#000;">898.50</div><div style="left:347px;top:475px;width:41px;height:15px;background:#c2d8fb;"></div><div class="t" style="left:85.60000000000002px;top:478.0px;width:300px;text-align:right;font-size:8.9px;line-height:10.23px;font-weight:bold;color:#000;">33.33</div><div style="left:390px;top:475px;width:41px;height:15px;background:#c2d8fb;"></div><div class="t" style="left:128.60000000000002px;top:478.0px;width:300px;text-align:right;font-size:8.9px;line-height:10.23px;font-weight:bold;color:#000;">626.72</div><div style="left:434px;top:475px;width:41px;height:15px;background:#c2d8fb;"></div><div class="t" style="left:172.60000000000002px;top:478.0px;width:300px;text-align:right;font-size:8.9px;line-height:10.23px;font-weight:bold;color:#000;">0.00</div><div style="left:477px;top:475px;width:40px;height:15px;background:#c2d8fb;"></div><div class="t" style="left:214.60000000000002px;top:478.0px;width:300px;text-align:right;font-size:8.9px;line-height:10.23px;font-weight:bold;color:#000;">0.00</div><div style="left:520px;top:475px;width:41px;height:15px;background:#c2d8fb;"></div><div class="t" style="left:258.6px;top:478.0px;width:300px;text-align:right;font-size:8.9px;line-height:10.23px;font-weight:bold;color:#000;">0.00</div><div style="left:563px;top:475px;width:42px;height:15px;background:#c2d8fb;"></div><div class="t" style="left:302.6px;top:478.0px;width:300px;text-align:right;font-size:8.9px;line-height:10.23px;font-weight:bold;color:#000;">0.00</div><div style="left:607px;top:475px;width:40px;height:15px;background:#c2d8fb;"></div><div class="t" style="left:344.6px;top:478.0px;width:300px;text-align:right;font-size:8.9px;line-height:10.23px;font-weight:bold;color:#000;">4,470.90</div><div style="left:0px;top:0px;width:650px;height:1px;background:#00e8f2;"></div><div style="left:0px;top:0px;width:1px;height:488px;background:#00e8f2;"></div><div style="left:648.5px;top:0px;width:1.5px;height:488px;background:#00e8f2;"></div><div style="left:0px;top:486.5px;width:650px;height:1.5px;background:#00e8f2;"></div>
</body></html>
